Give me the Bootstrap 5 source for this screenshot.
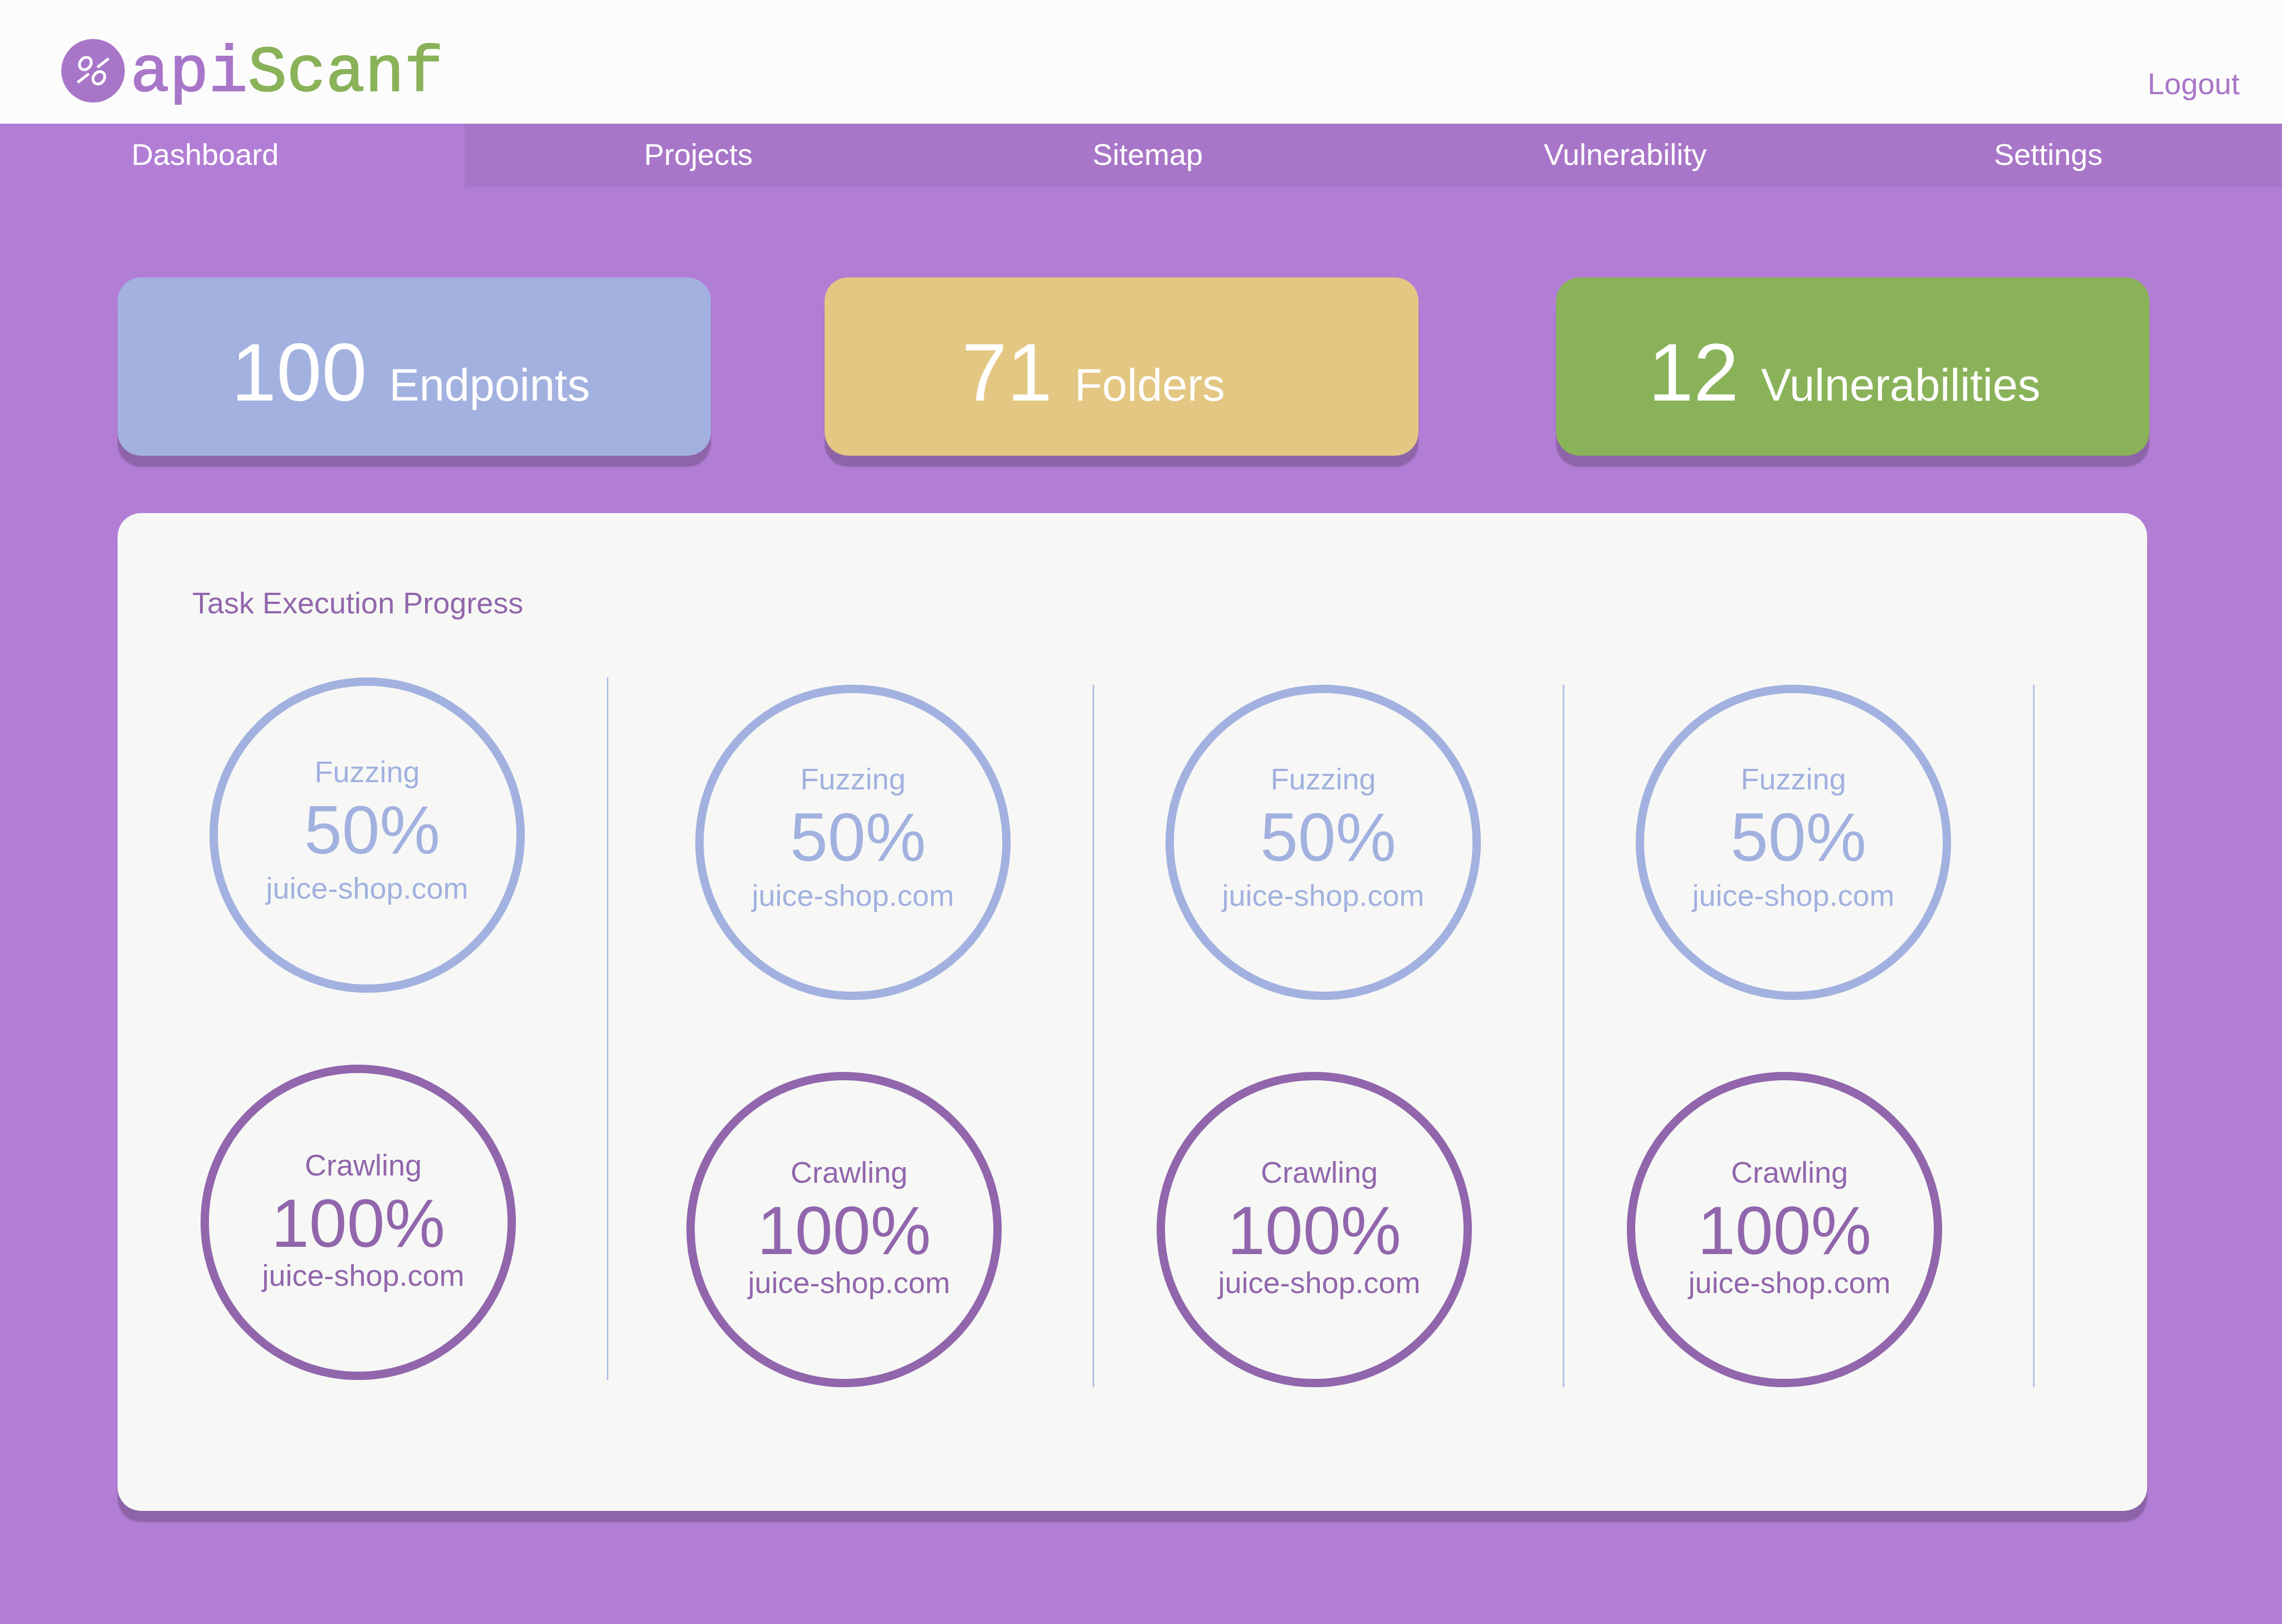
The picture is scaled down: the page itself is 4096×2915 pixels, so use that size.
<!DOCTYPE html>
<html lang="en">
<head>
<meta charset="utf-8">
<meta name="viewport" content="width=device-width, initial-scale=1">
<title>apiScanf – Dashboard</title>
<link href="https://cdn.jsdelivr.net/npm/bootstrap@5.3.0/dist/css/bootstrap.min.css" rel="stylesheet">
<style>
  :root {
    --page: #b27ed5;
    --bar: #a876c8;
    --deep: #9166ac;
    --shade: #8d64a8;
    --blue: #a2b1df;
    --sand: #e3c782;
    --green: #8ab259;
    --panel: #f7f8f6;
  }
  body {
    background: var(--page);
    font-family: "Liberation Sans", Arial, sans-serif;
    font-size: 54px;
    line-height: 56px;
  }
  a { text-decoration: none; }

  .topbar { background: #fcfcfc; padding: 70px 76px 28px 110px; }
  .brand-link { gap: 10px; }
  .brand-mark { width: 114px; height: 114px; }
  .brand-name {
    font-family: "Liberation Mono", monospace;
    font-size: 117px;
    line-height: 124px;
    color: var(--bar);
    -webkit-text-stroke: 2px currentColor;
  }
  .brand-name span { color: var(--green); }
  .logout { color: var(--bar); margin-top: 52px; }

  .tabs {
    display: grid;
    grid-template-columns: 834fr 1127fr 810fr 808fr 517fr;
    background: var(--bar);
  }
  .tabs a { color: #fff; padding: 27px 0 31px; }
  .tabs .active { background: var(--page); padding-left: 236px; }
  .tabs .active + a { padding-left: 322px; }

  .stats {
    display: grid;
    grid-template-columns: 1066fr 204fr 1066fr 247fr 1066fr;
    padding: 162px 238px 0 211px;
  }
  .stat {
    gap: 40px;
    padding: 97px 0 75px;
    color: #fff;
    font-size: 81px;
    line-height: 1;
  }
  .stat strong { font-size: 146px; font-weight: 400; line-height: 148px; }
  .raised { border-radius: 42px; box-shadow: 0 20px 3px var(--shade); }
  .stat-endpoints { background: var(--blue); padding-left: 204px; }
  .stat-folders { background: var(--sand); padding-left: 246px; grid-column: 3; }
  .stat-vulns { background: var(--green); padding-left: 166px; grid-column: 5; }

  .board { padding: 103px 242px 203px 211px; }
  .panel { background: var(--panel); color: var(--deep); padding: 133px 0 222px; }
  .panel h1 { font-size: 54px; line-height: 56px; font-weight: 400; margin: 0 0 106px; padding-left: 134px; }
  .lanes {
    display: grid;
    grid-template-columns: 881fr 872fr 844fr 844fr 202fr;
  }
  .lane {
    gap: 129px;
    margin-top: 13px;
    padding-right: 147px;
    border-right: 3px solid #b5c2e5;
  }
  .lane:first-child { margin: 0 0 13px; }
  .ring {
    width: 566px;
    height: 566px;
    border: 15px solid currentColor;
    border-radius: 50%;
  }
  .ring strong { font-size: 122px; line-height: 124px; font-weight: 400; margin-top: 15px; }
  .ring-fuzz { color: var(--blue); padding-top: 126px; }
  .ring-fuzz strong { padding-left: 18px; margin-bottom: 14px; }
  .ring-crawl { color: var(--deep); padding-top: 137px; margin-right: 16px; }
  .ring-crawl span { padding-left: 18px; }
  .ring-crawl strong { margin-bottom: 3px; }
</style>
</head>
<body>
<header class="topbar d-flex justify-content-between align-items-start">
  <a class="brand-link d-flex align-items-start" href="#">
    <svg class="brand-mark" viewBox="0 0 138 138" aria-hidden="true">
      <circle cx="69" cy="69" r="69" fill="#a876c8"/>
      <g fill="none" stroke="#fff" stroke-width="6">
        <ellipse cx="52.3" cy="53.3" rx="11.8" ry="14.4" transform="rotate(38 52.3 53.3)"/>
        <ellipse cx="81.7" cy="84.3" rx="11.8" ry="14.4" transform="rotate(38 81.700 84.300)"/>
        <path d="M103 42.500 78.500 61.500M60 75.500 35.500 94.500"/>
      </g>
    </svg>
    <div class="brand-name">api<span>Scanf</span></div>
  </a>
  <a class="logout" href="#">Logout</a>
</header>

<nav class="tabs" aria-label="Main">
  <a class="active" aria-current="page" href="#">Dashboard</a>
  <a href="#">Projects</a>
  <a href="#">Sitemap</a>
  <a href="#">Vulnerability</a>
  <a href="#">Settings</a>
</nav>

<main>
  <section class="stats">
    <div class="stat stat-endpoints raised d-flex align-items-baseline"><strong>100</strong><span>Endpoints</span></div>
    <div class="stat stat-folders raised d-flex align-items-baseline"><strong>71</strong><span>Folders</span></div>
    <div class="stat stat-vulns raised d-flex align-items-baseline"><strong>12</strong><span>Vulnerabilities</span></div>
  </section>

  <section class="board">
    <div class="panel raised">
      <h1>Task Execution Progress</h1>
      <div class="lanes">
        <div class="lane d-flex flex-column align-items-end">
          <div class="ring ring-fuzz d-flex flex-column align-items-center"><span>Fuzzing</span><strong>50%</strong><span>juice-shop.com</span></div>
          <div class="ring ring-crawl d-flex flex-column align-items-center"><span>Crawling</span><strong>100%</strong><span>juice-shop.com</span></div>
        </div>
        <div class="lane d-flex flex-column align-items-end">
          <div class="ring ring-fuzz d-flex flex-column align-items-center"><span>Fuzzing</span><strong>50%</strong><span>juice-shop.com</span></div>
          <div class="ring ring-crawl d-flex flex-column align-items-center"><span>Crawling</span><strong>100%</strong><span>juice-shop.com</span></div>
        </div>
        <div class="lane d-flex flex-column align-items-end">
          <div class="ring ring-fuzz d-flex flex-column align-items-center"><span>Fuzzing</span><strong>50%</strong><span>juice-shop.com</span></div>
          <div class="ring ring-crawl d-flex flex-column align-items-center"><span>Crawling</span><strong>100%</strong><span>juice-shop.com</span></div>
        </div>
        <div class="lane d-flex flex-column align-items-end">
          <div class="ring ring-fuzz d-flex flex-column align-items-center"><span>Fuzzing</span><strong>50%</strong><span>juice-shop.com</span></div>
          <div class="ring ring-crawl d-flex flex-column align-items-center"><span>Crawling</span><strong>100%</strong><span>juice-shop.com</span></div>
        </div>
      </div>
    </div>
  </section>
</main>
<script src="https://cdn.jsdelivr.net/npm/bootstrap@5.3.0/dist/js/bootstrap.bundle.min.js"></script>
</body>
</html>
